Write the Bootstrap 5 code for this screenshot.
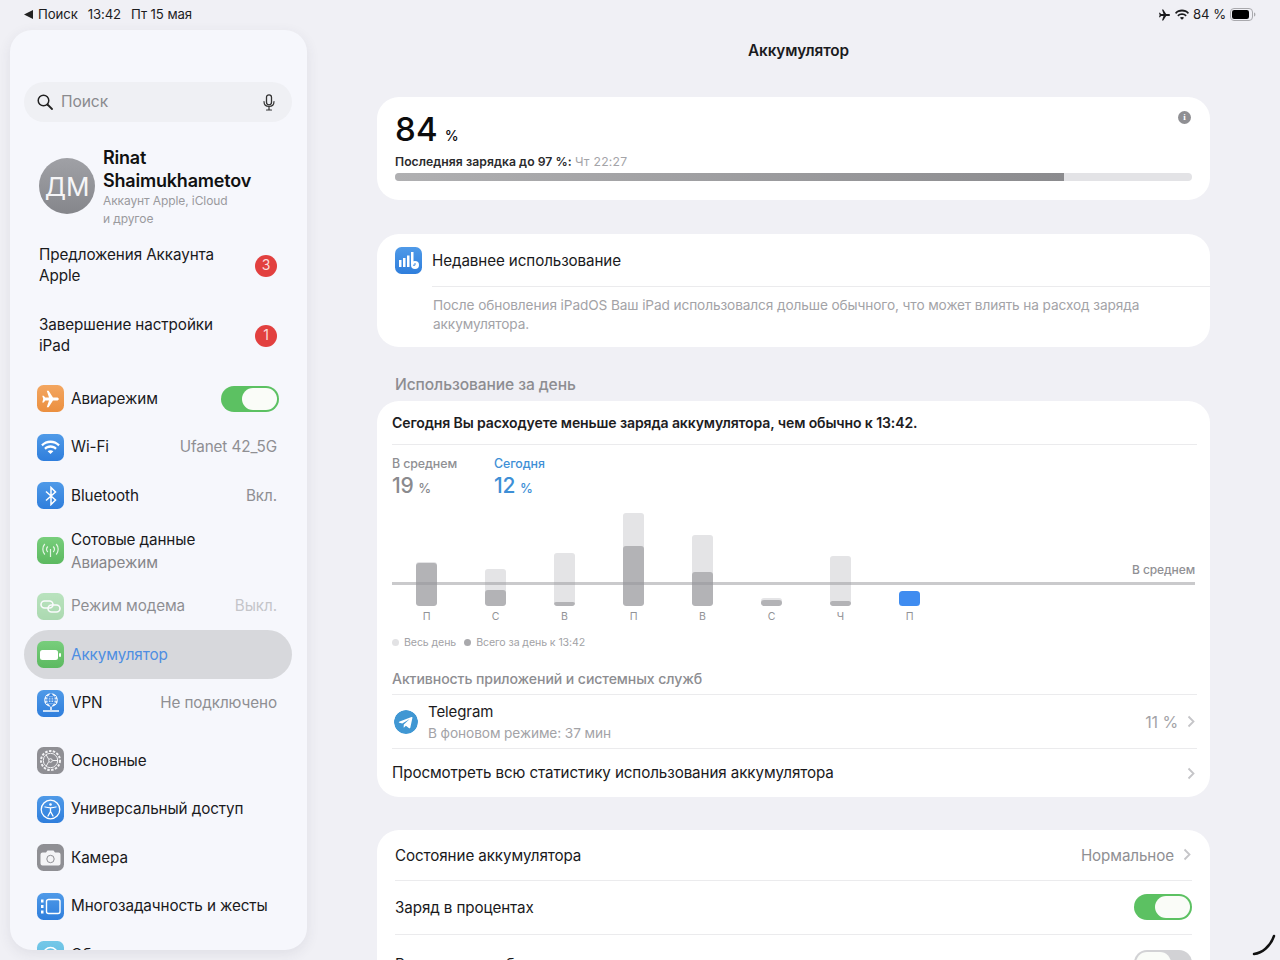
<!DOCTYPE html>
<html lang="ru"><head><meta charset="utf-8"><title>Аккумулятор</title>
<link href="https://cdn.jsdelivr.net/npm/bootstrap@5.3.0/dist/css/bootstrap.min.css" rel="stylesheet">
<style>
html,body{height:960px;overflow:hidden;background:#f0f0f5;}
body{font-family:Inter,"Noto Sans",sans-serif;color:#1a1a1c;font-size:15.25px;letter-spacing:-.1px;}
.ipad{width:1280px;height:960px;position:relative;overflow:hidden;}
.statusbar{height:30px;font-size:13.2px;padding:0 24px;color:#1c1c1e;}
.st-gap{margin-left:10px;}
.sidebar{margin-left:10px;width:297px;height:920px;background:#f6f7fc;border-radius:22px;padding:52px 15px 0 14px;overflow:hidden;box-shadow:0 4px 14px rgba(60,60,80,.09);flex:none;}
.searchbox{height:40px;background:#eff0f4;border-radius:20px;padding:0 16px 0 13px;color:#8a8a8e;font-size:15.6px;}
.profile{height:108px;padding:25px 0 0 15px;}
.avatar{width:56px;height:56px;border-radius:50%;background:linear-gradient(#a0a1a6,#85868b);color:#f5f5f7;font-size:26px;margin-top:11px;flex:none;}
.pname{font-size:18px;font-weight:600;line-height:22.5px;color:#111;letter-spacing:-.2px;}
.psub{font-size:12px;line-height:17.5px;color:#9a9a9e;margin-top:0;}
.tworow{height:70px;padding:1px 15px 0;line-height:20.5px;}
.redbadge{width:22px;height:22px;border-radius:50%;background:#e2403f;color:#fbdcdc;font-size:14px;flex:none;}
.menuitem{height:48.5px;padding:.5px 15px 0 13px;border-radius:25px;}
.menuitem.tall{height:62px;}
.menuitem .txt,.menuitem .val{padding-top:1.5px;}
.firstgroup{margin-top:4px;}
.secondgroup{margin-top:9px;}
.appicon{width:27px;height:27px;border-radius:6.5px;margin-right:7px;flex:none;}
.ic-orange{background:linear-gradient(#f3a660,#eb8f3f);}
.ic-blue{background:linear-gradient(#4f9ae8,#2f7edc);}
.ic-green{background:linear-gradient(#78ce7c,#5cb960);}
.ic-grey{background:#8f8f94;}
.muted-row{opacity:.48;}
.selected{background:#d7d8dc;}
.selected .txt{color:#4e8ee2;}
.val{color:#8f8f93;}
.subval{color:#86868a;line-height:23px;}
.sw{width:58px;height:26px;border-radius:13px;background:#5cc162;position:relative;flex:none;}
.sw::after{content:"";position:absolute;right:2px;top:2px;width:35px;height:22px;border-radius:11px;background:#fafcf8;}
.sw.off{background:#d2d2d5;}
.sw.off::after{right:auto;left:2px;}
.content{padding-left:70px;padding-right:70px;flex:1;min-width:0;}
.pagetitle{height:67px;font-weight:600;font-size:15.3px;padding:10px 0 0 10px;text-align:center;color:#1b1b1d;}
.pane{background:#fff;border-radius:22px;}
.bigpct{font-size:33px;font-weight:500;line-height:38px;color:#0c0c0e;letter-spacing:.2px;}
.bigpct span{font-size:14px;margin-left:7px;}
.lastcharge{font-size:12.2px;font-weight:600;color:#2a2a2c;line-height:16px;letter-spacing:.05px;margin-top:-1px;}
.lastcharge span{font-weight:400;color:#a4a4a8;letter-spacing:.25px;}
.chargebar{height:8px;border-radius:4px;background:#e3e3e6;overflow:hidden;margin-top:3px;}
.chargefill{height:100%;background:linear-gradient(90deg,#b0b0b2,#8b8b8e);}
.infoico{width:13px;height:13px;border-radius:50%;background:#8f8f93;color:#fff;font:700 9px/13px "Liberation Serif",serif;text-align:center;position:absolute;right:19px;top:14px;letter-spacing:0;}
.hr{height:1px;background:#ebebed;}
.note{font-size:13.65px;line-height:19px;color:#a3a3a7;padding:9px 40px 0 56px;}
.recent{height:52px;padding-left:18px;}
.recent span.rtitle{font-size:15.2px;padding-top:2px;}
.sectionhdr{height:54px;padding:28px 0 0 18px;font-size:15.6px;font-weight:500;color:#8d8d91;line-height:19px;}
.day{padding:0 13px 0 15px;height:396px;}
.summary{font-size:14.05px;font-weight:600;color:#1d1d1f;height:43px;padding-top:11px;letter-spacing:-.12px;}
.avgcap{font-size:12.4px;font-weight:500;color:#8f8f93;line-height:14px;}
.avgval{font-size:21px;font-weight:500;line-height:30px;color:#8a8a8e;}
.avgval span{font-size:13px;margin-left:-1px;}
.tblue{color:#3e8fd6;}
.chart{position:relative;height:113px;margin-top:8px;}
.barcol{width:69px;height:94px;display:flex;justify-content:center;align-items:flex-end;flex:none;}
.barlight{width:21px;background:#e4e4e6;border-radius:3px;display:flex;align-items:flex-end;overflow:hidden;}
.bardark{width:100%;background:#b3b3b6;border-radius:3px;}
.barblue{width:21px;height:15px;border-radius:3.5px;background:#3f8cf0;}
.daylbl{width:69px;text-align:center;font-size:10.5px;color:#929296;line-height:21px;flex:none;}
.avgline{position:absolute;left:0;right:2px;top:70px;height:3px;background:rgba(150,150,153,.5);}
.avgtext{position:absolute;right:2px;top:49px;font-size:12px;font-weight:500;color:#909094;}
.legend{font-size:10.6px;color:#a2a2a6;height:30px;padding-top:11px;line-height:13px;}
.dot{width:7px;height:7px;border-radius:50%;display:inline-block;margin:3px 5px 0 0;}
.dot2{margin-left:8px;}
.acthdr{font-size:14.1px;font-weight:500;color:#8d8d91;height:39px;padding-top:14px;line-height:19px;}
.tgrow{height:53px;}
.tgname{font-size:15px;line-height:22px;}
.tgsub{font-size:13.7px;line-height:20px;color:#a3a3a7;}
.tgicon{width:24px;height:24px;border-radius:50%;margin-right:10px;margin-left:2px;flex:none;}
.viewall{height:49px;font-size:15.2px;}
.chev{margin-left:9px;flex:none;}
.chev2{margin-right:2px;}
.pct{color:#a3a3a7;font-size:16px;}
.lastcard{margin-top:33px;height:300px;padding:0 18px;font-size:15.2px;}
.r1{height:49.5px;}.r2{height:53px;}.r3{height:56px;}
.r1 .rlabel,.r1 .val{padding-top:4px;}
.r2 .rlabel{padding-top:2px;}
.r3 .rlabel{padding-top:5px;}
.arc{position:absolute;right:2px;bottom:3px;}
</style></head><body>
<div class="ipad">
  <div class="statusbar d-flex align-items-center justify-content-between">
    <div class="d-flex align-items-center">
      <svg width="10" height="9" viewBox="0 0 10 9" class="me-1"><path d="M0 4.5 9 0v9z" fill="#222"/></svg>
      <span>Поиск</span><span class="st-gap">13:42</span><span class="st-gap">Пт 15 мая</span>
    </div>
    <div class="d-flex align-items-center" style="gap:4px">
      <svg width="13" height="12" viewBox="0 0 24 24"><path d="M23 12c0-1.3-1.2-2-2.5-2h-5.2L9.5 1H7l3 9H5L3 7.5H1L2.3 12 1 16.500h2L5 14h5l-3 9h2.500l5.800-9h5.200c1.300 0 2.500-.7 2.500-2z" fill="#1c1c1e"/></svg>
      <svg width="14" height="11" viewBox="0 0 24 18"><path d="M12 4c4 0 7.500 1.500 10 4l2-2.200C20.800 2.500 16.600.5 12 .5S3.200 2.500 0 5.800L2 8c2.500-2.500 6-4 10-4zm0 6c2.400 0 4.500.9 6 2.400l2.100-2.200C18 8 15.200 6.800 12 6.800S6 8 3.900 10.200L6 12.400C7.500 10.900 9.600 10 12 10zm-3.700 4.600L12 18l3.700-3.400c-1-.9-2.300-1.400-3.700-1.400s-2.700.5-3.700 1.400z" fill="#1c1c1e"/></svg>
      <span>84 %</span>
      <svg width="26" height="13" viewBox="0 0 26 13"><rect x=".5" y=".5" width="22" height="12" rx="3.5" fill="none" stroke="#a9a9ad"/><rect x="2" y="2" width="17" height="9" rx="2.200" fill="#000"/><path d="M24 4.500c1 .3 1.400 1 1.400 2s-.4 1.700-1.400 2z" fill="#a9a9ad"/></svg>
    </div>
  </div>
  <div class="d-flex">
    <aside class="sidebar">
      <div class="searchbox d-flex align-items-center">
        <svg width="16" height="16" viewBox="0 0 16 16" class="me-2"><circle cx="6.500" cy="6.500" r="5.300" fill="none" stroke="#222" stroke-width="1.500"/><path d="M10.500 10.500 15 15" stroke="#222" stroke-width="1.800" stroke-linecap="round"/></svg>
        <span class="flex-grow-1">Поиск</span>
        <svg width="14" height="17" viewBox="0 0 14 17"><rect x="4.500" y=".8" width="5" height="10" rx="2.500" fill="none" stroke="#333" stroke-width="1.300"/><path d="M2 7.500c0 3 2 5 5 5s5-2 5-5M7 12.500V16M4.500 16h5" fill="none" stroke="#333" stroke-width="1.200" stroke-linecap="round"/></svg>
      </div>
      <div class="profile d-flex">
        <div class="avatar d-flex align-items-center justify-content-center">ДМ</div>
        <div class="ms-2">
          <div class="pname">Rinat<br>Shaimukhametov</div>
          <div class="psub">Аккаунт Apple, iCloud<br>и другое</div>
        </div>
      </div>
      <div class="tworow d-flex align-items-center justify-content-between"><span>Предложения Аккаунта<br>Apple</span><span class="redbadge d-flex align-items-center justify-content-center">3</span></div>
      <div class="tworow d-flex align-items-center justify-content-between"><span>Завершение настройки<br>iPad</span><span class="redbadge d-flex align-items-center justify-content-center">1</span></div>
      <div class="firstgroup">
        <div class="menuitem d-flex align-items-center"><span class="appicon ic-orange d-flex align-items-center justify-content-center"><svg width="19" height="18" viewBox="0 0 24 24"><path d="M23 12c0-1.300-1.200-2-2.500-2h-5.200L9.500 1H7l3 9H5L3 7.500H1L2.300 12 1 16.500h2L5 14h5l-3 9h2.500l5.800-9h5.200c1.300 0 2.500-.7 2.500-2z" fill="#fff"/></svg></span><span class="flex-grow-1 txt">Авиарежим</span><span class="sw" style="margin-right:-2px"></span></div>
        <div class="menuitem d-flex align-items-center"><span class="appicon ic-blue d-flex align-items-center justify-content-center"><svg width="19" height="14" viewBox="0 0 24 18"><path d="M12 4c4 0 7.500 1.500 10 4l2-2.200C20.800 2.500 16.600.5 12 .5S3.200 2.500 0 5.800L2 8c2.500-2.500 6-4 10-4zm0 6c2.400 0 4.500.9 6 2.400l2.100-2.200C18 8 15.200 6.800 12 6.800S6 8 3.900 10.200L6 12.400C7.500 10.900 9.600 10 12 10zm-3.700 4.600L12 18l3.700-3.400c-1-.9-2.300-1.400-3.700-1.400s-2.700.5-3.700 1.400z" fill="#fff"/></svg></span><span class="flex-grow-1 txt">Wi-Fi</span><span class="val">Ufanet 42_5G</span></div>
        <div class="menuitem d-flex align-items-center"><span class="appicon ic-blue d-flex align-items-center justify-content-center"><svg width="12" height="20" viewBox="0 0 12 20"><path d="M1 5.500 10.500 14 6 18.500v-17L10.500 6 1 14.500" fill="none" stroke="#fff" stroke-width="1.500"/></svg></span><span class="flex-grow-1 txt">Bluetooth</span><span class="val">Вкл.</span></div>
        <div class="menuitem tall d-flex align-items-center"><span class="appicon ic-green d-flex align-items-center justify-content-center"><svg width="21" height="15" viewBox="0 0 21 15" fill="none" stroke="#e4f5e4" stroke-width="1.200"><path d="M10.500 6v8M7.800 3.500a4 4 0 0 0 0 5.500M13.200 3.500a4 4 0 0 1 0 5.500M4.800 1a8 8 0 0 0 0 10.500M16.200 1a8 8 0 0 1 0 10.500"/></svg></span><span class="txt"><span class="d-block">Сотовые данные</span><span class="subval d-block">Авиарежим</span></span></div>
        <div class="menuitem muted-row d-flex align-items-center"><span class="appicon ic-green d-flex align-items-center justify-content-center"><svg width="21" height="13" viewBox="0 0 21 13" fill="none" stroke="#fff" stroke-width="1.600"><rect x="1" y="1" width="12" height="7" rx="3.500"/><rect x="8" y="5" width="12" height="7" rx="3.500"/></svg></span><span class="flex-grow-1 txt">Режим модема</span><span class="val">Выкл.</span></div>
        <div class="menuitem selected d-flex align-items-center"><span class="appicon ic-green d-flex align-items-center justify-content-center"><svg width="21" height="12" viewBox="0 0 21 12"><rect x="0" y="1" width="18" height="10" rx="2.500" fill="#fff"/><rect x="19" y="4" width="2" height="4" rx="1" fill="#fff"/></svg></span><span class="flex-grow-1 txt">Аккумулятор</span></div>
        <div class="menuitem d-flex align-items-center"><span class="appicon ic-blue d-flex align-items-center justify-content-center"><svg width="20" height="22" viewBox="0 0 20 22" fill="none" stroke="#fff" stroke-width="1.100"><circle cx="10" cy="8" r="6.300" fill="#cfe2f8"/><path d="M3.700 8h12.600M10 1.700v12.600M5 4.500c3 1.500 7 1.500 10 0M5 11.500c3-1.500 7-1.500 10 0M10 1.700c-4 4-4 8.600 0 12.600 4-4 4-8.600 0-12.600z" stroke="#3a86de"/><path d="M10 15v3M2 19h16" stroke-width="1.500"/></svg></span><span class="flex-grow-1 txt">VPN</span><span class="val">Не подключено</span></div>
      </div>
      <div class="secondgroup">
        <div class="menuitem d-flex align-items-center"><span class="appicon ic-grey d-flex align-items-center justify-content-center"><svg width="23" height="23" viewBox="0 0 23 23" fill="none" stroke="#f2f2f4"><circle cx="11.500" cy="11.500" r="9.500" stroke-width="2" stroke-dasharray="2.500 1.400"/><circle cx="11.500" cy="11.500" r="7.200" stroke-width="1"/><circle cx="11.500" cy="11.500" r="1.800" stroke-width="1"/><path d="M9.800 10.500 7 5.500M9.800 12.500 7 17.500M13.500 11.500H19" stroke-width="1"/></svg></span><span class="txt">Основные</span></div>
        <div class="menuitem d-flex align-items-center"><span class="appicon ic-blue d-flex align-items-center justify-content-center"><svg width="21" height="21" viewBox="0 0 21 21" fill="none" stroke="#fff"><circle cx="10.500" cy="10.500" r="9.300" stroke-width="1.300"/><circle cx="10.500" cy="5.500" r="1.300" fill="#fff" stroke="none"/><path d="M5 8c3.500 1 7.500 1 11 0M10.500 9v3.500M10.500 12.500 8 17M10.500 12.500 13 17" stroke-width="1.300" stroke-linecap="round"/></svg></span><span class="txt">Универсальный доступ</span></div>
        <div class="menuitem d-flex align-items-center"><span class="appicon ic-grey d-flex align-items-center justify-content-center"><svg width="21" height="16" viewBox="0 0 21 16"><path d="M2.500 2.500H6L7.500.5h6L15 2.500h3.500A2 2 0 0 1 20.500 4.500v9a2 2 0 0 1-2 2h-16a2 2 0 0 1-2-2v-9a2 2 0 0 1 2-2z" fill="#f4f4f6"/><circle cx="10.500" cy="9" r="3.700" fill="none" stroke="#8f8f94" stroke-width="1"/></svg></span><span class="txt">Камера</span></div>
        <div class="menuitem d-flex align-items-center"><span class="appicon ic-blue d-flex align-items-center justify-content-center"><svg width="21" height="17" viewBox="0 0 21 17" fill="none" stroke="#fff" stroke-width="1.400"><rect x="6.500" y="1.500" width="13.500" height="14" rx="2"/><path d="M1 3h2.500M1 8.500h2.500M1 14h2.500" stroke-width="3"/></svg></span><span class="txt">Многозадачность и жесты</span></div>
        <div class="menuitem d-flex align-items-center"><span class="appicon d-flex align-items-center justify-content-center" style="background:linear-gradient(#74c8e8,#5ab7e0)"><svg width="19" height="19" viewBox="0 0 19 19" fill="none" stroke="#fff" stroke-width="1.500"><circle cx="9.500" cy="9.500" r="3"/><circle cx="9.500" cy="9.500" r="7"/></svg></span><span class="txt">Обои</span></div>
      </div>
    </aside>
    <main class="content">
      <div class="pagetitle">Аккумулятор</div>
      <section class="pane position-relative" style="height:103px;padding:13px 18px 0">
        <span class="infoico">i</span>
        <div class="bigpct">84<span>%</span></div>
        <div class="lastcharge">Последняя зарядка до 97 %: <span>Чт 22:27</span></div>
        <div class="chargebar"><div class="chargefill" style="width:83.900%"></div></div>
      </section>
      <section class="pane" style="height:113px;margin-top:34px">
        <div class="recent d-flex align-items-center">
          <span class="appicon ic-blue d-flex align-items-center justify-content-center" style="margin-right:10px"><svg width="23" height="20" viewBox="0 0 23 20"><path d="M2 10h2.500v7H2zM6 8h2.500v9H6zM10 5.500h2.500V17H10zM14 2h2.500v12H14z" fill="#fff"/><circle cx="18" cy="15" r="4" fill="#fff"/><path d="M18 13v2.200h-2" stroke="#3f8ae0" fill="none"/></svg></span>
          <span class="rtitle">Недавнее использование</span>
        </div>
        <div class="hr" style="margin-left:55px"></div>
        <div class="note">После обновления iPadOS Ваш iPad использовался дольше обычного, что может влиять на расход заряда аккумулятора.</div>
      </section>
      <div class="sectionhdr">Использование за день</div>
      <section class="pane day">
        <div class="summary">Сегодня Вы расходуете меньше заряда аккумулятора, чем обычно к 13:42.</div>
        <div class="hr"></div>
        <div class="d-flex" style="padding-top:12px;height:59px">
          <div style="width:102px"><div class="avgcap">В среднем</div><div class="avgval">19 <span>%</span></div></div>
          <div><div class="avgcap tblue">Сегодня</div><div class="avgval tblue">12 <span>%</span></div></div>
        </div>
        <div class="chart">
          <div class="avgline"></div>
          <div class="avgtext">В среднем</div>
          <div class="d-flex">
            <div class="barcol"><div class="barlight" style="height:44px"><div class="bardark" style="height:43px"></div></div></div>
            <div class="barcol"><div class="barlight" style="height:37px"><div class="bardark" style="height:16px"></div></div></div>
            <div class="barcol"><div class="barlight" style="height:53px"><div class="bardark" style="height:4px"></div></div></div>
            <div class="barcol"><div class="barlight" style="height:93px"><div class="bardark" style="height:60px"></div></div></div>
            <div class="barcol"><div class="barlight" style="height:71px"><div class="bardark" style="height:34px"></div></div></div>
            <div class="barcol"><div class="barlight" style="height:8px"><div class="bardark" style="height:6px"></div></div></div>
            <div class="barcol"><div class="barlight" style="height:50px"><div class="bardark" style="height:5px"></div></div></div>
            <div class="barcol"><div class="barblue"></div></div>
          </div>
          <div class="d-flex">
            <div class="daylbl">П</div><div class="daylbl">С</div><div class="daylbl">В</div><div class="daylbl">П</div><div class="daylbl">В</div><div class="daylbl">С</div><div class="daylbl">Ч</div><div class="daylbl">П</div>
          </div>
        </div>
        <div class="legend d-flex align-items-start"><span class="dot" style="background:#e2e2e4"></span><span>Весь день</span><span class="dot dot2" style="background:#a9a9ac"></span><span>Всего за день к 13:42</span></div>
        <div class="acthdr">Активность приложений и системных служб</div>
        <div class="hr"></div>
        <div class="tgrow d-flex align-items-center">
          <svg class="tgicon" viewBox="0 0 24 24"><circle cx="12" cy="12" r="12" fill="#4097d3"/><path d="M5 11.800 17.500 7c.6-.2 1.100.1.900.9l-2.100 9.800c-.2.700-.6.800-1.200.5l-3.200-2.400-1.600 1.500c-.2.200-.3.300-.7.300l.2-3.200 5.900-5.300-7.400 4.500-3-.9c-.7-.2-.7-.6.200-.9z" fill="#fff"/></svg>
          <div class="flex-grow-1"><div class="tgname">Telegram</div><div class="tgsub">В фоновом режиме: 37 мин</div></div>
          <span class="pct">11 %</span>
          <svg class="chev chev2" width="8" height="13" viewBox="0 0 8 13" fill="none"><path d="m1.500 1.500 5 5-5 5" stroke="#c5c5c8" stroke-width="1.800"/></svg>
        </div>
        <div class="hr"></div>
        <div class="viewall d-flex align-items-center justify-content-between"><span>Просмотреть всю статистику использования аккумулятора</span><svg class="chev chev2" width="8" height="13" viewBox="0 0 8 13" fill="none"><path d="m1.500 1.500 5 5-5 5" stroke="#c5c5c8" stroke-width="1.800"/></svg></div>
      </section>
      <section class="pane lastcard">
        <div class="r1 d-flex align-items-center"><span class="flex-grow-1 rlabel">Состояние аккумулятора</span><span class="val">Нормальное</span><svg class="chev" style="margin-right:1px" width="8" height="13" viewBox="0 0 8 13" fill="none"><path d="m1.500 1.500 5 5-5 5" stroke="#c5c5c8" stroke-width="1.800"/></svg></div>
        <div class="hr"></div>
        <div class="r2 d-flex align-items-center"><span class="flex-grow-1 rlabel">Заряд в процентах</span><span class="sw"></span></div>
        <div class="hr"></div>
        <div class="r3 d-flex align-items-center"><span class="flex-grow-1 rlabel">Выносливость батареи</span><span class="sw off"></span></div>
      </section>
    </main>
  </div>
  <svg class="arc" width="26" height="24" viewBox="0 0 26 24"><path d="M2 21c8-1 16-7 20-18" fill="none" stroke="#111" stroke-width="2.500" stroke-linecap="round"/></svg>
</div>
<script src="https://cdn.jsdelivr.net/npm/bootstrap@5.3.0/dist/js/bootstrap.bundle.min.js"></script>
</body></html>
